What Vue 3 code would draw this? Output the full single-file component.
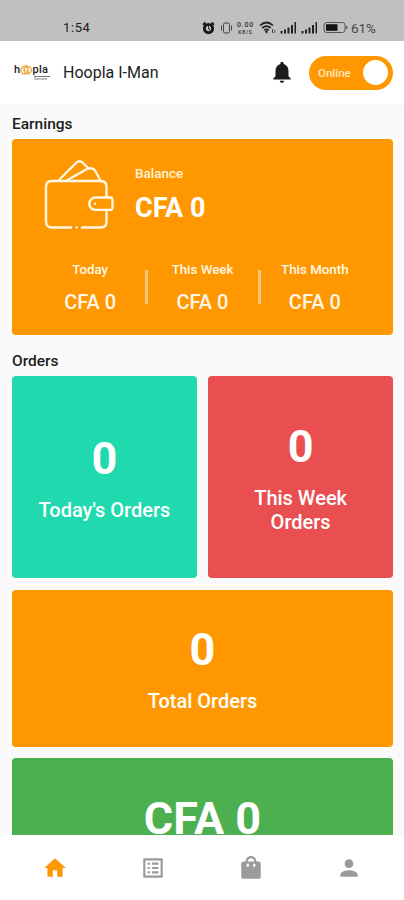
<script setup>
const periods = [
  { label: 'Today', amount: 'CFA 0' },
  { label: 'This Week', amount: 'CFA 0' },
  { label: 'This Month', amount: 'CFA 0' },
]

const tiles = [
  { value: '0', label: "Today's Orders", tone: 'teal' },
  { value: '0', label: 'This Week Orders', tone: 'red' },
  { value: '0', label: 'Total Orders', tone: 'orange' },
  { value: 'CFA 0', tone: 'green' },
]

// Bottom navigation glyphs, 24x24 grid
const tabs = [
  { name: 'Home', active: true, path: 'M10 20v-6h4v6h5v-8h3L12 3 2 12h3v8z' },
  {
    name: 'Orders',
    path: 'M19 5v14H5V5h14m1.1-2H3.9c-.5 0-.9.4-.9.9v16.2c0 .4.4.9.9.9h16.2c.4 0 .9-.5.9-.9V3.900c0-.5-.5-.9-.9-.9zM11 7h6v2h-6V7zm0 4h6v2h-6v-2zm0 4h6v2h-6zM7 7h2v2H7zm0 4h2v2H7zm0 4h2v2H7z',
  },
  {
    name: 'Shop',
    path: 'M19 6h-2c0-2.760-2.240-5-5-5S7 3.240 7 6H5c-1.100 0-2 .9-2 2v12c0 1.100.9 2 2 2h14c1.100 0 2-.9 2-2V8c0-1.100-.9-2-2-2zm-9 4c0 .55-.45 1-1 1s-1-.45-1-1V8h2v2zm2-7c1.660 0 3 1.340 3 3H9c0-1.660 1.340-3 3-3zm4 7c0 .55-.45 1-1 1s-1-.45-1-1V8h2v2z',
  },
  {
    name: 'Profile',
    path: 'M12 12c2.210 0 4-1.790 4-4s-1.790-4-4-4-4 1.790-4 4 1.790 4 4 4zm0 2c-2.670 0-8 1.340-8 4v2h16v-2c0-2.660-5.330-4-8-4z',
  },
]
</script>

<template>
  <div class="screen">
    <div class="status">
      <span class="status__time">1:54</span>
      <div class="status__icons">
        <svg width="13" height="14" viewBox="0 0 13 14">
          <circle cx="6.500" cy="7.500" r="4.100" fill="none" stroke="#151515" stroke-width="2.900" />
          <path d="M1 3.700 3.500 1.500M12 3.700 9.500 1.500" stroke="#151515" stroke-width="1.800" />
          <path d="M6.500 5.200v2.600l1.600 1" fill="none" stroke="#151515" stroke-width="1" />
        </svg>
        <svg class="status__vibrate" width="13" height="14" viewBox="0 0 13 14" fill="none" stroke="#444">
          <rect x="3.500" y="2" width="6" height="10" rx="1.500" />
          <path d="M1.500 4.500v5M11.500 4.500v5" />
        </svg>
        <div class="status__rate"><span>0.00</span><span>KB/S</span></div>
        <svg class="status__wifi" width="17" height="13" viewBox="0 0 17 13" fill="none" stroke="#222" stroke-width="1.700">
          <path d="M1 4.500q6.500-6 13 0M3.200 7q4.300-3.800 8.600 0M5.300 9.300q2.200-1.800 4.400 0" />
          <path d="m7.500 9.200 1.500 1.600-1.500 1.600L6 10.800z" fill="#222" stroke="none" />
          <path d="M13.500 8v4M15.800 9v3" stroke="#444" stroke-width="1" />
        </svg>
        <svg v-for="n in 2" :key="n" class="status__signal" width="17" height="13" viewBox="0 0 17 13" fill="#222">
          <path d="M.5 10h2v2.500h-2zM4 8.500h2v4H4zM7.500 6.500h2v6h-2zM11 4h2v8.500h-2zM14.500 1H16v11.500h-1.500z" />
        </svg>
        <svg class="status__battery" width="25" height="13" viewBox="0 0 25 13">
          <rect x="1" y="1.500" width="21" height="10" rx="2.500" fill="none" stroke="#555" />
          <path d="M3 3.200h11.500v6.600H3z" fill="#151515" />
          <path d="M23.700 5v3" stroke="#555" stroke-width="1.300" />
        </svg>
        <span class="status__percent">61%</span>
      </div>
    </div>

    <header class="header">
      <div class="logo">
        <div class="logo__word">
          <span>h</span>
          <svg width="12" height="12" viewBox="0 0 12 12" fill="none" stroke="#f0a640">
            <circle cx="4.500" cy="6.200" r="3.600" stroke-width="1.400" />
            <circle cx="7.700" cy="6.200" r="3.600" stroke-width="1.400" />
            <path d="m2 4 4-3 4 3M3 4.500l6 4.500" />
          </svg>
          <span>pla</span>
        </div>
        <span class="logo__tag">Service</span>
      </div>
      <h1 class="header__name">Hoopla I-Man</h1>
      <svg class="header__bell" width="26" height="26" viewBox="0 0 24 24" fill="#1c1c1c">
        <path d="M12 22c1.100 0 2-.9 2-2h-4c0 1.100.89 2 2 2zm6-6v-5c0-3.070-1.640-5.640-4.500-6.320V4c0-.83-.67-1.500-1.500-1.500s-1.500.67-1.500 1.500v.68C7.630 5.360 6 7.920 6 11v5l-2 2v1h16v-1l-2-2z" />
      </svg>
      <button class="toggle" type="button">
        <span class="toggle__label">Online</span>
        <span class="toggle__knob"></span>
      </button>
    </header>

    <main class="content">
      <h2 class="title">Earnings</h2>
      <section class="earnings">
        <div class="balance">
          <svg class="balance__icon" width="72" height="72" viewBox="0 0 72 72" fill="none" stroke="#fff7e4" stroke-width="2.400" stroke-linecap="round" stroke-linejoin="round">
            <path d="M27 68.500H8Q2 68.500 2 62.500V28q0-6 6-6h48.500q6 0 6 6v10M62.500 51v11.500q0 6-6 6H38" />
            <path d="M32.700 68.500h.1" />
            <path d="M66 38.500H51.500a6.200 6.200 0 0 0 0 12.400H66q2.500 0 2.500-2.500V41q0-2.500-2.500-2.500z" />
            <path d="M51 44.700h.1" />
            <path d="M15 21 32.500 3.500q3-2.500 6 0L44.500 9.500M23.500 21 42.500 10.200q6-2.500 8.500 1.300l5.500 10" />
          </svg>
          <div>
            <p class="balance__label">Balance</p>
            <p class="balance__amount">CFA 0</p>
          </div>
        </div>
        <div class="periods">
          <div v-for="p in periods" :key="p.label" class="period">
            <p class="period__label">{{ p.label }}</p>
            <p class="period__amount">{{ p.amount }}</p>
          </div>
        </div>
      </section>

      <h2 class="title title--orders">Orders</h2>
      <section class="tiles">
        <article v-for="tile in tiles" :key="tile.tone" class="tile" :class="`tile--${tile.tone}`">
          <p class="tile__value">{{ tile.value }}</p>
          <p v-if="tile.label" class="tile__label">{{ tile.label }}</p>
        </article>
      </section>
    </main>

    <nav class="nav">
      <a v-for="tab in tabs" :key="tab.name" class="nav__item" :class="{ 'nav__item--active': tab.active }">
        <svg width="26" height="26" viewBox="0 0 24 24" fill="currentColor">
          <path :d="tab.path" />
        </svg>
      </a>
    </nav>
  </div>
</template>

<style>
body {
  margin: 0;
  overflow: hidden;
}
</style>

<style scoped>
.screen {
  display: flex;
  flex-direction: column;
  height: 900px;
  overflow: hidden;
  background: #fafafa;
  color: #1c1c1c;
  font-family: Roboto, 'Liberation Sans', sans-serif;
}

p,
h1,
h2 {
  margin: 0;
}

svg {
  display: block;
  flex: none;
}

.status {
  flex: none;
  display: flex;
  align-items: center;
  justify-content: space-between;
  box-sizing: border-box;
  height: 41px;
  padding: 14px 28px 0 63px;
  background: #c0c0c0;
}

.status__time {
  font-size: 13px;
  letter-spacing: 0.6px;
}

.status__icons {
  display: flex;
  align-items: center;
}

.status__vibrate {
  margin-left: 5px;
}

.status__rate {
  display: flex;
  flex-direction: column;
  width: 19px;
  margin-left: 3px;
  color: #333;
  font-size: 7px;
  font-weight: 500;
  line-height: 8px;
  letter-spacing: 0.8px;
  text-align: center;
}

.status__rate span + span {
  font-size: 5px;
  line-height: 6px;
}

.status__wifi {
  margin-left: 4px;
}

.status__signal {
  margin-left: 4px;
}

.status__battery {
  margin-left: 5px;
}

.status__percent {
  margin-left: 3px;
  color: #444;
  font-size: 13.500px;
  line-height: 14px;
}

.header {
  flex: none;
  display: flex;
  align-items: center;
  box-sizing: border-box;
  height: 63px;
  padding: 0 11px 0 14px;
  background: #fff;
  box-shadow: 0 1px 3px rgba(0, 0, 0, 0.02);
}

.logo {
  display: flex;
  flex-direction: column;
  width: 36px;
  margin-right: 13px;
}

.logo__word {
  display: flex;
  align-items: center;
  font-size: 11px;
  font-weight: 500;
  line-height: 12px;
  letter-spacing: 0.3px;
}

.logo__tag {
  align-self: flex-end;
  width: 16px;
  border-top: 1px solid #777;
  color: #555;
  font-size: 4px;
  line-height: 4px;
}

.header__name {
  flex: 1;
  font-size: 16px;
  font-weight: 400;
}

.header__bell {
  margin-right: 14px;
  margin-bottom: 1px;
}

.toggle {
  display: flex;
  align-items: center;
  justify-content: space-between;
  width: 84px;
  height: 34px;
  padding: 0 5px 0 9px;
  border: 0;
  border-radius: 17px;
  background: #ff9800;
  font-family: inherit;
}

.toggle__label {
  color: #ffe8c0;
  font-size: 11.500px;
  font-weight: 500;
}

.toggle__knob {
  width: 25px;
  height: 25px;
  border-radius: 50%;
  background: #fff;
}

.content {
  flex: 1;
  min-height: 0;
  overflow: hidden;
  padding: 10px 11px 0 12px;
}

.title {
  height: 25px;
  font-size: 15.500px;
  font-weight: 500;
  line-height: 20px;
}

.title--orders {
  margin-top: 16px;
}

.earnings {
  box-sizing: border-box;
  height: 196px;
  padding: 20px 22px 0;
  border-radius: 4px;
  background: #ff9800;
  color: #fff;
}

.balance {
  display: flex;
  gap: 19px;
  padding-left: 10px;
}

.balance__label {
  margin-top: 6px;
  color: #fff3dc;
  font-size: 13.500px;
  font-weight: 500;
  line-height: 16px;
}

.balance__amount {
  margin-top: 11px;
  font-size: 27px;
  font-weight: 700;
  line-height: 32px;
}

.periods {
  display: grid;
  grid-template-columns: repeat(3, 1fr);
  margin-top: 31px;
}

.period {
  position: relative;
  color: #fff7e8;
  text-align: center;
}

.period + .period::before {
  content: '';
  position: absolute;
  top: 8px;
  left: -1px;
  width: 3px;
  height: 34px;
  background: #ffc774;
}

.period__label {
  font-size: 13.300px;
  font-weight: 500;
  line-height: 16px;
}

.period__amount {
  margin-top: 12px;
  font-size: 20px;
  font-weight: 500;
  line-height: 24px;
}

.tiles {
  display: grid;
  grid-template-columns: 1fr 1fr;
  grid-template-rows: 202px 157px 157px;
  gap: 11.500px;
}

.tile {
  display: flex;
  flex-direction: column;
  align-items: center;
  justify-content: center;
  padding: 0 24px;
  border-radius: 4px;
  color: #fff;
  text-align: center;
}

.tile__value {
  font-size: 45px;
  font-weight: 700;
  line-height: 54px;
}

.tile__label {
  margin-top: 12px;
  font-size: 20px;
  font-weight: 500;
  line-height: 24px;
}

.tile--teal {
  background: #20d9ae;
}

.tile--red {
  background: #e94f51;
}

.tile--orange {
  grid-column: 1 / -1;
  background: #ff9800;
}

.tile--green {
  grid-column: 1 / -1;
  justify-content: flex-start;
  padding-top: 34px;
  background: #4caf50;
}

.nav {
  flex: none;
  display: flex;
  justify-content: space-around;
  box-sizing: border-box;
  height: 65px;
  padding: 20px 6px 0;
  background: #fff;
}

.nav__item {
  color: #9b9b9b;
}

.nav__item--active {
  color: #ff9800;
}
</style>
